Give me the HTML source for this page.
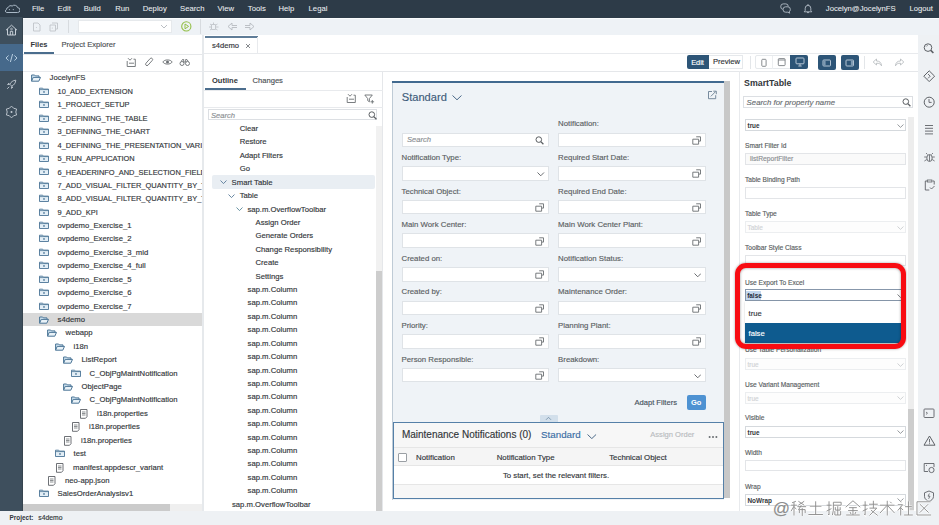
<!DOCTYPE html>
<html><head><meta charset="utf-8"><style>
html,body{margin:0;padding:0;width:939px;height:525px;overflow:hidden;background:#fff;position:relative}
body{font-family:"Liberation Sans",sans-serif}
.t{position:absolute;line-height:1;white-space:nowrap;-webkit-text-stroke:0.15px currentColor}
.r{position:absolute}
.clip{position:absolute;overflow:hidden}
</style></head><body>
<div class="r" style="left:0px;top:0px;width:939px;height:17.5px;background:#2d3b48;"></div>
<div class="r" style="left:0px;top:17px;width:23px;height:494px;background:#3e4f5d;"></div>
<div class="r" style="left:22px;top:17px;width:1px;height:494px;background:#36444f;"></div>
<div class="r" style="left:0px;top:44px;width:23px;height:26.5px;background:#46698b;"></div>
<div class="r" style="left:23px;top:17.5px;width:916px;height:18px;background:#eef2f6;"></div>
<div class="r" style="left:23px;top:17.5px;width:916px;height:1.5px;background:#f9fbfc;"></div>
<div class="r" style="left:0px;top:510.5px;width:939px;height:14.5px;background:#eef1f4;"></div>
<div class="r" style="left:23px;top:35px;width:180px;height:475.5px;background:#ffffff;"></div>
<div class="r" style="left:202px;top:35px;width:1.5px;height:475.5px;background:#e6e9ec;"></div>
<div class="r" style="left:203.5px;top:35px;width:714.5px;height:475.5px;background:#ffffff;"></div>
<div class="r" style="left:918px;top:35px;width:21px;height:475.5px;background:#eef1f4;"></div>
<div class="t" style="left:31.90px;top:4.88px;font-size:7.7px;color:#eef0f2;font-weight:400;font-style:normal;-webkit-text-stroke:0.05px currentColor">File</div>
<div class="t" style="left:57.60px;top:4.88px;font-size:7.7px;color:#eef0f2;font-weight:400;font-style:normal;-webkit-text-stroke:0.05px currentColor">Edit</div>
<div class="t" style="left:83.70px;top:4.88px;font-size:7.7px;color:#eef0f2;font-weight:400;font-style:normal;-webkit-text-stroke:0.05px currentColor">Build</div>
<div class="t" style="left:115.20px;top:4.88px;font-size:7.7px;color:#eef0f2;font-weight:400;font-style:normal;-webkit-text-stroke:0.05px currentColor">Run</div>
<div class="t" style="left:142.80px;top:4.88px;font-size:7.7px;color:#eef0f2;font-weight:400;font-style:normal;-webkit-text-stroke:0.05px currentColor">Deploy</div>
<div class="t" style="left:180.10px;top:4.88px;font-size:7.7px;color:#eef0f2;font-weight:400;font-style:normal;-webkit-text-stroke:0.05px currentColor">Search</div>
<div class="t" style="left:217.50px;top:4.88px;font-size:7.7px;color:#eef0f2;font-weight:400;font-style:normal;-webkit-text-stroke:0.05px currentColor">View</div>
<div class="t" style="left:247.80px;top:4.88px;font-size:7.7px;color:#eef0f2;font-weight:400;font-style:normal;-webkit-text-stroke:0.05px currentColor">Tools</div>
<div class="t" style="left:278.50px;top:4.88px;font-size:7.7px;color:#eef0f2;font-weight:400;font-style:normal;-webkit-text-stroke:0.05px currentColor">Help</div>
<div class="t" style="left:308.60px;top:4.88px;font-size:7.7px;color:#eef0f2;font-weight:400;font-style:normal;-webkit-text-stroke:0.05px currentColor">Legal</div>
<div class="t" style="left:825.80px;top:4.88px;font-size:7.7px;color:#eef0f2;font-weight:400;font-style:normal;-webkit-text-stroke:0.05px currentColor">Jocelyn@JocelynFS</div>
<div class="t" style="left:909.60px;top:4.97px;font-size:7.6px;color:#eef0f2;font-weight:400;font-style:normal;-webkit-text-stroke:0.05px currentColor">Logout</div>
<svg class="r" style="left:4px;top:4px;" width="16" height="10" viewBox="0 0 16 10" fill="none"><path d="M2.5 8.5h11a2.4 2.4 0 0 0 0.2-4.8a3.4 3.4 0 0 0-5.6-1.6a2.6 2.6 0 0 0-3.9 1.4a1.9 1.9 0 0 0-1.7 2a1.6 1.6 0 0 0 0 3z" stroke="#a9b8c6" stroke-width="1"/><circle cx="5.4" cy="5.6" r="0.6" fill="#a9b8c6"/><circle cx="9.3" cy="5.6" r="0.6" fill="#a9b8c6"/></svg>
<svg class="r" style="left:780px;top:3px;" width="12" height="11" viewBox="0 0 12 11" fill="none"><path d="M3.2 0.9h2.6a2.4 2.3 0 0 1 2.4 2.3v0.4M3.2 0.9a2.4 2.3 0 0 0-2.4 2.3v0.8a2.4 2.3 0 0 0 2 2.3" stroke="#b3bdc7" stroke-width="0.9"/><path d="M5.6 3.8h2.2a2.5 2.4 0 0 1 2.5 2.4v0.6a2.5 2.4 0 0 1-1.2 2l0.6 1.4l-1.9-1h-2.2a2.5 2.4 0 0 1-2.5-2.4v-0.6a2.5 2.4 0 0 1 2.5-2.4z" fill="#2d3b48" stroke="#b3bdc7" stroke-width="0.9"/></svg>
<svg class="r" style="left:803px;top:3px;" width="10" height="11" viewBox="0 0 10 11" fill="none"><path d="M5 1v1M2.2 7.5V5.2a2.8 2.8 0 0 1 5.6 0V7.5l1 1.3H1.2z" stroke="#b3bdc7" stroke-width="0.9"/><path d="M4 9.6h2" stroke="#b3bdc7" stroke-width="0.9"/></svg>
<svg class="r" style="left:5px;top:24px;" width="13" height="12" viewBox="0 0 13 12" fill="none"><path d="M1 6.2L6.5 1.2L12 6.2M2.5 5v6h8V5M5.3 11V7.3h2.4V11" stroke="#c6ced6" stroke-width="1"/><circle cx="6.5" cy="5" r="0.9" stroke="#c6ced6" stroke-width="0.7"/></svg>
<svg class="r" style="left:5px;top:53px;" width="13" height="10" viewBox="0 0 13 10" fill="none"><path d="M3.6 2.5L1 5l2.6 2.5M9.4 2.5L12 5L9.4 7.5M7.6 1L5.4 9" stroke="#b7cde0" stroke-width="1"/></svg>
<svg class="r" style="left:6px;top:79px;" width="11" height="11" viewBox="0 0 11 11" fill="none"><path d="M9.8 1.2C7 1.4 5 3 3.8 5.2L5.8 7.2C8 6 9.6 4 9.8 1.2z" stroke="#c6ced6" stroke-width="0.9"/><path d="M3.8 5.2L1.6 5.6L3 4M5.8 7.2L5.4 9.4L7 8M3.2 7.8L1.2 9.8" stroke="#c6ced6" stroke-width="0.9"/></svg>
<svg class="r" style="left:5px;top:105px;" width="13" height="14" viewBox="0 0 13 14" fill="none"><path d="M6.50 1.10L8.65 3.28L11.61 4.05L10.80 7.00L11.61 9.95L8.65 10.72L6.50 12.90L4.35 10.72L1.39 9.95L2.20 7.00L1.39 4.05L4.35 3.28Z" stroke="#c6ced6" stroke-width="0.9" stroke-linejoin="round"/><circle cx="6.5" cy="7" r="1" fill="#c6ced6"/></svg>
<svg class="r" style="left:32px;top:22px;" width="10" height="10" viewBox="0 0 10 10" fill="none"><path d="M1.5 1h4.5l2 2v6H1.5z" stroke="#bfc4c9" stroke-width="0.9"/><circle cx="4.4" cy="5.4" r="0.5" fill="#bfc4c9"/></svg>
<svg class="r" style="left:49px;top:22px;" width="10" height="10" viewBox="0 0 10 10" fill="none"><path d="M3 1h5.5v6H7M1 3h5.5v6H1z" stroke="#bfc4c9" stroke-width="0.9"/><circle cx="3.3" cy="6" r="0.6" fill="#bfc4c9"/></svg>
<div class="r" style="left:67.5px;top:20px;width:1px;height:13px;background:#d7dbdf;"></div>
<div class="r" style="left:77.8px;top:19.8px;width:94.7px;height:13.3px;background:#ffffff;border:1px solid #e6e9ec;box-sizing:border-box"></div>
<svg class="r" style="left:160px;top:24px;" width="8" height="5" viewBox="0 0 8 5" fill="none"><path d="M1 1l3 3l3-3" stroke="#b2b7bc" stroke-width="0.9"/></svg>
<svg class="r" style="left:180px;top:20px;" width="13" height="13" viewBox="0 0 13 13" fill="none"><circle cx="6.3" cy="6.4" r="4.6" stroke="#93bf47" stroke-width="1.1"/><path d="M5 4v4.8L8.6 6.4z" stroke="#93bf47" stroke-width="1"/></svg>
<div class="r" style="left:199.5px;top:19px;width:1px;height:15px;background:#d7dbdf;"></div>
<svg class="r" style="left:208px;top:21px;" width="12" height="11" viewBox="0 0 12 11" fill="none"><path d="M3.5 3.5h4v5h-4zM1 6h2.5M8 6h2.5M2 3l1.5 1M9.5 3L8 4M2 9l1.5-1M9.5 9L8 8M5.5 1.5v2" stroke="#bfc4c9" stroke-width="0.9"/></svg>
<svg class="r" style="left:227px;top:22px;" width="11" height="9" viewBox="0 0 11 9" fill="none"><path d="M10 3.5H5V1L1 4.5L5 8V5.5h5" stroke="#b5babf" stroke-width="0.9"/></svg>
<svg class="r" style="left:244px;top:22px;" width="11" height="9" viewBox="0 0 11 9" fill="none"><path d="M1 3.5h5V1l4 3.5L6 8V5.5H1" stroke="#b5babf" stroke-width="0.9"/></svg>
<div class="t" style="left:30.40px;top:41.15px;font-size:7.5px;color:#32363a;font-weight:700;font-style:normal;-webkit-text-stroke:0">Files</div>
<div class="t" style="left:61.50px;top:41.07px;font-size:7.6px;color:#4d5155;font-weight:400;font-style:normal;">Project Explorer</div>
<div class="r" style="left:24px;top:52px;width:30px;height:2px;background:#4b6d8d;"></div>
<div class="r" style="left:23px;top:53.5px;width:179px;height:1px;background:#e5e7ea;"></div>
<div class="r" style="left:23px;top:70.5px;width:179px;height:1px;background:#e8eaed;"></div>
<svg class="r" style="left:126px;top:57px;" width="11" height="11" viewBox="0 0 11 11" fill="none"><path d="M2 1.2l2 2l2-2M7.5 2.2h1.8v7.3H1.2V4" stroke="#6b6f73" stroke-width="0.9"/><path d="M3 6.2h5" stroke="#6b6f73" stroke-width="0.9"/></svg>
<svg class="r" style="left:144px;top:57px;" width="10" height="11" viewBox="0 0 10 11" fill="none"><path d="M6.2 1.5a1.4 1.4 0 0 1 2 2L4 8.2a1.4 1.4 0 0 1-2-2z" stroke="#6b6f73" stroke-width="0.9"/></svg>
<svg class="r" style="left:162px;top:58px;" width="11" height="8" viewBox="0 0 11 8" fill="none"><path d="M0.8 4C2.5 1.2 8.5 1.2 10.2 4C8.5 6.8 2.5 6.8 0.8 4z" stroke="#6b6f73" stroke-width="0.9"/><circle cx="5.5" cy="4" r="1.5" fill="#6b6f73"/></svg>
<svg class="r" style="left:179px;top:58px;" width="12" height="9" viewBox="0 0 12 9" fill="none"><circle cx="3" cy="5.5" r="2" stroke="#6b6f73" stroke-width="0.9"/><circle cx="8.5" cy="5.5" r="2" stroke="#6b6f73" stroke-width="0.9"/><path d="M2.2 3.5L3.5 1.5h1.2v2.5h2V1.5h1.2L9.3 3.5" stroke="#6b6f73" stroke-width="0.9"/></svg>
<div class="r" style="left:23px;top:313px;width:179px;height:13px;background:#d9d9d9;"></div>
<div class="clip" style="left:23px;top:71px;width:179px;height:432px">
<div class="t" style="left:26.60px;top:3.38px;font-size:7.7px;color:#32363a;font-weight:400;font-style:normal;">JocelynFS</div>
<svg class="r" style="left:8.099999999999998px;top:3.2px;" width="10" height="8" viewBox="0 0 10 8" fill="none"><path d="M0.6 7.2V1h3l0.8 0.9h3.6v1.5" fill="#cfe3f0" stroke="#4b7596" stroke-width="1"/><path d="M0.6 7.2l1.6-3.8h7.3l-1.7 3.8z" fill="#e9f2f8" stroke="#4b7596" stroke-width="1"/></svg>
<div class="t" style="left:34.60px;top:17.01px;font-size:7.45px;color:#32363a;font-weight:400;font-style:normal;">10_ADD_EXTENSION</div>
<svg class="r" style="left:16.099999999999998px;top:15.820000000000002px;" width="10" height="8" viewBox="0 0 10 8" fill="none"><path d="M0.5 1.2h3.2l0.8 0.9h5v5.4h-9z" fill="#e3eef6" stroke="#4b7596" stroke-width="0.9"/><path d="M0.5 2.6h9" stroke="#4b7596" stroke-width="0.8"/><circle cx="5" cy="4.9" r="0.85" fill="#4b7596"/></svg>
<div class="t" style="left:34.60px;top:30.43px;font-size:7.45px;color:#32363a;font-weight:400;font-style:normal;">1_PROJECT_SETUP</div>
<svg class="r" style="left:16.099999999999998px;top:29.240000000000002px;" width="10" height="8" viewBox="0 0 10 8" fill="none"><path d="M0.5 1.2h3.2l0.8 0.9h5v5.4h-9z" fill="#e3eef6" stroke="#4b7596" stroke-width="0.9"/><path d="M0.5 2.6h9" stroke="#4b7596" stroke-width="0.8"/><circle cx="5" cy="4.9" r="0.85" fill="#4b7596"/></svg>
<div class="t" style="left:34.60px;top:43.85px;font-size:7.45px;color:#32363a;font-weight:400;font-style:normal;">2_DEFINING_THE_TABLE</div>
<svg class="r" style="left:16.099999999999998px;top:42.65999999999999px;" width="10" height="8" viewBox="0 0 10 8" fill="none"><path d="M0.5 1.2h3.2l0.8 0.9h5v5.4h-9z" fill="#e3eef6" stroke="#4b7596" stroke-width="0.9"/><path d="M0.5 2.6h9" stroke="#4b7596" stroke-width="0.8"/><circle cx="5" cy="4.9" r="0.85" fill="#4b7596"/></svg>
<div class="t" style="left:34.60px;top:57.27px;font-size:7.45px;color:#32363a;font-weight:400;font-style:normal;">3_DEFINING_THE_CHART</div>
<svg class="r" style="left:16.099999999999998px;top:56.080000000000005px;" width="10" height="8" viewBox="0 0 10 8" fill="none"><path d="M0.5 1.2h3.2l0.8 0.9h5v5.4h-9z" fill="#e3eef6" stroke="#4b7596" stroke-width="0.9"/><path d="M0.5 2.6h9" stroke="#4b7596" stroke-width="0.8"/><circle cx="5" cy="4.9" r="0.85" fill="#4b7596"/></svg>
<div class="t" style="left:34.60px;top:70.69px;font-size:7.45px;color:#32363a;font-weight:400;font-style:normal;">4_DEFINING_THE_PRESENTATION_VARIANT</div>
<svg class="r" style="left:16.099999999999998px;top:69.5px;" width="10" height="8" viewBox="0 0 10 8" fill="none"><path d="M0.5 1.2h3.2l0.8 0.9h5v5.4h-9z" fill="#e3eef6" stroke="#4b7596" stroke-width="0.9"/><path d="M0.5 2.6h9" stroke="#4b7596" stroke-width="0.8"/><circle cx="5" cy="4.9" r="0.85" fill="#4b7596"/></svg>
<div class="t" style="left:34.60px;top:84.11px;font-size:7.45px;color:#32363a;font-weight:400;font-style:normal;">5_RUN_APPLICATION</div>
<svg class="r" style="left:16.099999999999998px;top:82.91999999999999px;" width="10" height="8" viewBox="0 0 10 8" fill="none"><path d="M0.5 1.2h3.2l0.8 0.9h5v5.4h-9z" fill="#e3eef6" stroke="#4b7596" stroke-width="0.9"/><path d="M0.5 2.6h9" stroke="#4b7596" stroke-width="0.8"/><circle cx="5" cy="4.9" r="0.85" fill="#4b7596"/></svg>
<div class="t" style="left:34.60px;top:97.53px;font-size:7.45px;color:#32363a;font-weight:400;font-style:normal;">6_HEADERINFO_AND_SELECTION_FIELDS</div>
<svg class="r" style="left:16.099999999999998px;top:96.34px;" width="10" height="8" viewBox="0 0 10 8" fill="none"><path d="M0.5 1.2h3.2l0.8 0.9h5v5.4h-9z" fill="#e3eef6" stroke="#4b7596" stroke-width="0.9"/><path d="M0.5 2.6h9" stroke="#4b7596" stroke-width="0.8"/><circle cx="5" cy="4.9" r="0.85" fill="#4b7596"/></svg>
<div class="t" style="left:34.60px;top:110.95px;font-size:7.45px;color:#32363a;font-weight:400;font-style:normal;">7_ADD_VISUAL_FILTER_QUANTITY_BY_TYPE</div>
<svg class="r" style="left:16.099999999999998px;top:109.76000000000002px;" width="10" height="8" viewBox="0 0 10 8" fill="none"><path d="M0.5 1.2h3.2l0.8 0.9h5v5.4h-9z" fill="#e3eef6" stroke="#4b7596" stroke-width="0.9"/><path d="M0.5 2.6h9" stroke="#4b7596" stroke-width="0.8"/><circle cx="5" cy="4.9" r="0.85" fill="#4b7596"/></svg>
<div class="t" style="left:34.60px;top:124.37px;font-size:7.45px;color:#32363a;font-weight:400;font-style:normal;">8_ADD_VISUAL_FILTER_QUANTITY_BY_TYPE</div>
<svg class="r" style="left:16.099999999999998px;top:123.18px;" width="10" height="8" viewBox="0 0 10 8" fill="none"><path d="M0.5 1.2h3.2l0.8 0.9h5v5.4h-9z" fill="#e3eef6" stroke="#4b7596" stroke-width="0.9"/><path d="M0.5 2.6h9" stroke="#4b7596" stroke-width="0.8"/><circle cx="5" cy="4.9" r="0.85" fill="#4b7596"/></svg>
<div class="t" style="left:34.60px;top:137.79px;font-size:7.45px;color:#32363a;font-weight:400;font-style:normal;">9_ADD_KPI</div>
<svg class="r" style="left:16.099999999999998px;top:136.6px;" width="10" height="8" viewBox="0 0 10 8" fill="none"><path d="M0.5 1.2h3.2l0.8 0.9h5v5.4h-9z" fill="#e3eef6" stroke="#4b7596" stroke-width="0.9"/><path d="M0.5 2.6h9" stroke="#4b7596" stroke-width="0.8"/><circle cx="5" cy="4.9" r="0.85" fill="#4b7596"/></svg>
<div class="t" style="left:34.60px;top:151.00px;font-size:7.7px;color:#32363a;font-weight:400;font-style:normal;">ovpdemo_Exercise_1</div>
<svg class="r" style="left:16.099999999999998px;top:150.02px;" width="10" height="8" viewBox="0 0 10 8" fill="none"><path d="M0.5 1.2h3.2l0.8 0.9h5v5.4h-9z" fill="#e3eef6" stroke="#4b7596" stroke-width="0.9"/><path d="M0.5 2.6h9" stroke="#4b7596" stroke-width="0.8"/><circle cx="5" cy="4.9" r="0.85" fill="#4b7596"/></svg>
<div class="t" style="left:34.60px;top:164.42px;font-size:7.7px;color:#32363a;font-weight:400;font-style:normal;">ovpdemo_Exercise_2</div>
<svg class="r" style="left:16.099999999999998px;top:163.44px;" width="10" height="8" viewBox="0 0 10 8" fill="none"><path d="M0.5 1.2h3.2l0.8 0.9h5v5.4h-9z" fill="#e3eef6" stroke="#4b7596" stroke-width="0.9"/><path d="M0.5 2.6h9" stroke="#4b7596" stroke-width="0.8"/><circle cx="5" cy="4.9" r="0.85" fill="#4b7596"/></svg>
<div class="t" style="left:34.60px;top:177.84px;font-size:7.7px;color:#32363a;font-weight:400;font-style:normal;">ovpdemo_Exercise_3_mid</div>
<svg class="r" style="left:16.099999999999998px;top:176.86px;" width="10" height="8" viewBox="0 0 10 8" fill="none"><path d="M0.5 1.2h3.2l0.8 0.9h5v5.4h-9z" fill="#e3eef6" stroke="#4b7596" stroke-width="0.9"/><path d="M0.5 2.6h9" stroke="#4b7596" stroke-width="0.8"/><circle cx="5" cy="4.9" r="0.85" fill="#4b7596"/></svg>
<div class="t" style="left:34.60px;top:191.26px;font-size:7.7px;color:#32363a;font-weight:400;font-style:normal;">ovpdemo_Exercise_4_full</div>
<svg class="r" style="left:16.099999999999998px;top:190.28px;" width="10" height="8" viewBox="0 0 10 8" fill="none"><path d="M0.5 1.2h3.2l0.8 0.9h5v5.4h-9z" fill="#e3eef6" stroke="#4b7596" stroke-width="0.9"/><path d="M0.5 2.6h9" stroke="#4b7596" stroke-width="0.8"/><circle cx="5" cy="4.9" r="0.85" fill="#4b7596"/></svg>
<div class="t" style="left:34.60px;top:204.68px;font-size:7.7px;color:#32363a;font-weight:400;font-style:normal;">ovpdemo_Exercise_5</div>
<svg class="r" style="left:16.099999999999998px;top:203.70000000000002px;" width="10" height="8" viewBox="0 0 10 8" fill="none"><path d="M0.5 1.2h3.2l0.8 0.9h5v5.4h-9z" fill="#e3eef6" stroke="#4b7596" stroke-width="0.9"/><path d="M0.5 2.6h9" stroke="#4b7596" stroke-width="0.8"/><circle cx="5" cy="4.9" r="0.85" fill="#4b7596"/></svg>
<div class="t" style="left:34.60px;top:218.10px;font-size:7.7px;color:#32363a;font-weight:400;font-style:normal;">ovpdemo_Exercise_6</div>
<svg class="r" style="left:16.099999999999998px;top:217.12000000000003px;" width="10" height="8" viewBox="0 0 10 8" fill="none"><path d="M0.5 1.2h3.2l0.8 0.9h5v5.4h-9z" fill="#e3eef6" stroke="#4b7596" stroke-width="0.9"/><path d="M0.5 2.6h9" stroke="#4b7596" stroke-width="0.8"/><circle cx="5" cy="4.9" r="0.85" fill="#4b7596"/></svg>
<div class="t" style="left:34.60px;top:231.52px;font-size:7.7px;color:#32363a;font-weight:400;font-style:normal;">ovpdemo_Exercise_7</div>
<svg class="r" style="left:16.099999999999998px;top:230.54px;" width="10" height="8" viewBox="0 0 10 8" fill="none"><path d="M0.5 1.2h3.2l0.8 0.9h5v5.4h-9z" fill="#e3eef6" stroke="#4b7596" stroke-width="0.9"/><path d="M0.5 2.6h9" stroke="#4b7596" stroke-width="0.8"/><circle cx="5" cy="4.9" r="0.85" fill="#4b7596"/></svg>
<div class="t" style="left:34.60px;top:244.94px;font-size:7.7px;color:#32363a;font-weight:400;font-style:normal;">s4demo</div>
<svg class="r" style="left:16.099999999999998px;top:244.76px;" width="10" height="8" viewBox="0 0 10 8" fill="none"><path d="M0.6 7.2V1h3l0.8 0.9h3.6v1.5" fill="#cfe3f0" stroke="#4b7596" stroke-width="1"/><path d="M0.6 7.2l1.6-3.8h7.3l-1.7 3.8z" fill="#e9f2f8" stroke="#4b7596" stroke-width="1"/></svg>
<div class="t" style="left:42.60px;top:258.36px;font-size:7.7px;color:#32363a;font-weight:400;font-style:normal;">webapp</div>
<svg class="r" style="left:24.099999999999998px;top:258.18px;" width="10" height="8" viewBox="0 0 10 8" fill="none"><path d="M0.6 7.2V1h3l0.8 0.9h3.6v1.5" fill="#cfe3f0" stroke="#4b7596" stroke-width="1"/><path d="M0.6 7.2l1.6-3.8h7.3l-1.7 3.8z" fill="#e9f2f8" stroke="#4b7596" stroke-width="1"/></svg>
<div class="t" style="left:50.60px;top:271.78px;font-size:7.7px;color:#32363a;font-weight:400;font-style:normal;">i18n</div>
<svg class="r" style="left:32.1px;top:271.59999999999997px;" width="10" height="8" viewBox="0 0 10 8" fill="none"><path d="M0.6 7.2V1h3l0.8 0.9h3.6v1.5" fill="#cfe3f0" stroke="#4b7596" stroke-width="1"/><path d="M0.6 7.2l1.6-3.8h7.3l-1.7 3.8z" fill="#e9f2f8" stroke="#4b7596" stroke-width="1"/></svg>
<div class="t" style="left:58.60px;top:285.20px;font-size:7.7px;color:#32363a;font-weight:400;font-style:normal;">ListReport</div>
<svg class="r" style="left:40.1px;top:285.02px;" width="10" height="8" viewBox="0 0 10 8" fill="none"><path d="M0.6 7.2V1h3l0.8 0.9h3.6v1.5" fill="#cfe3f0" stroke="#4b7596" stroke-width="1"/><path d="M0.6 7.2l1.6-3.8h7.3l-1.7 3.8z" fill="#e9f2f8" stroke="#4b7596" stroke-width="1"/></svg>
<div class="t" style="left:66.60px;top:298.62px;font-size:7.7px;color:#32363a;font-weight:400;font-style:normal;">C_ObjPgMaintNotification</div>
<svg class="r" style="left:48.10000000000001px;top:297.64px;" width="10" height="8" viewBox="0 0 10 8" fill="none"><path d="M0.5 1.2h3.2l0.8 0.9h5v5.4h-9z" fill="#e3eef6" stroke="#4b7596" stroke-width="0.9"/><path d="M0.5 2.6h9" stroke="#4b7596" stroke-width="0.8"/><circle cx="5" cy="4.9" r="0.85" fill="#4b7596"/></svg>
<div class="t" style="left:58.60px;top:312.04px;font-size:7.7px;color:#32363a;font-weight:400;font-style:normal;">ObjectPage</div>
<svg class="r" style="left:40.1px;top:311.86px;" width="10" height="8" viewBox="0 0 10 8" fill="none"><path d="M0.6 7.2V1h3l0.8 0.9h3.6v1.5" fill="#cfe3f0" stroke="#4b7596" stroke-width="1"/><path d="M0.6 7.2l1.6-3.8h7.3l-1.7 3.8z" fill="#e9f2f8" stroke="#4b7596" stroke-width="1"/></svg>
<div class="t" style="left:66.60px;top:325.46px;font-size:7.7px;color:#32363a;font-weight:400;font-style:normal;">C_ObjPgMaintNotification</div>
<svg class="r" style="left:48.10000000000001px;top:325.28px;" width="10" height="8" viewBox="0 0 10 8" fill="none"><path d="M0.6 7.2V1h3l0.8 0.9h3.6v1.5" fill="#cfe3f0" stroke="#4b7596" stroke-width="1"/><path d="M0.6 7.2l1.6-3.8h7.3l-1.7 3.8z" fill="#e9f2f8" stroke="#4b7596" stroke-width="1"/></svg>
<div class="t" style="left:74.00px;top:338.88px;font-size:7.7px;color:#32363a;font-weight:400;font-style:normal;">i18n.properties</div>
<svg class="r" style="left:56.7px;top:337.9px;" width="8" height="10" viewBox="0 0 8 10" fill="none"><path d="M0.5 0.5h6.5v7.2l-1.5 1.6h-5z" fill="#fff" stroke="#5d6166" stroke-width="0.9"/><path d="M2 3h3.5M2 4.5h3.5M2 6h3.5" stroke="#5d6166" stroke-width="0.7"/></svg>
<div class="t" style="left:66.00px;top:352.30px;font-size:7.7px;color:#32363a;font-weight:400;font-style:normal;">i18n.properties</div>
<svg class="r" style="left:48.7px;top:351.32px;" width="8" height="10" viewBox="0 0 8 10" fill="none"><path d="M0.5 0.5h6.5v7.2l-1.5 1.6h-5z" fill="#fff" stroke="#5d6166" stroke-width="0.9"/><path d="M2 3h3.5M2 4.5h3.5M2 6h3.5" stroke="#5d6166" stroke-width="0.7"/></svg>
<div class="t" style="left:58.00px;top:365.72px;font-size:7.7px;color:#32363a;font-weight:400;font-style:normal;">i18n.properties</div>
<svg class="r" style="left:40.699999999999996px;top:364.73999999999995px;" width="8" height="10" viewBox="0 0 8 10" fill="none"><path d="M0.5 0.5h6.5v7.2l-1.5 1.6h-5z" fill="#fff" stroke="#5d6166" stroke-width="0.9"/><path d="M2 3h3.5M2 4.5h3.5M2 6h3.5" stroke="#5d6166" stroke-width="0.7"/></svg>
<div class="t" style="left:50.60px;top:379.14px;font-size:7.7px;color:#32363a;font-weight:400;font-style:normal;">test</div>
<svg class="r" style="left:32.1px;top:378.15999999999997px;" width="10" height="8" viewBox="0 0 10 8" fill="none"><path d="M0.5 1.2h3.2l0.8 0.9h5v5.4h-9z" fill="#e3eef6" stroke="#4b7596" stroke-width="0.9"/><path d="M0.5 2.6h9" stroke="#4b7596" stroke-width="0.8"/><circle cx="5" cy="4.9" r="0.85" fill="#4b7596"/></svg>
<div class="t" style="left:50.00px;top:392.56px;font-size:7.7px;color:#32363a;font-weight:400;font-style:normal;">manifest.appdescr_variant</div>
<svg class="r" style="left:32.699999999999996px;top:391.58px;" width="8" height="10" viewBox="0 0 8 10" fill="none"><path d="M0.5 0.5h6.5v7.2l-1.5 1.6h-5z" fill="#fff" stroke="#5d6166" stroke-width="0.9"/><path d="M2 3h3.5M2 4.5h3.5M2 6h3.5" stroke="#5d6166" stroke-width="0.7"/></svg>
<div class="t" style="left:42.00px;top:405.98px;font-size:7.7px;color:#32363a;font-weight:400;font-style:normal;">neo-app.json</div>
<svg class="r" style="left:24.7px;top:405.0px;" width="8" height="10" viewBox="0 0 8 10" fill="none"><path d="M0.5 0.5h6.5v7.2l-1.5 1.6h-5z" fill="#fff" stroke="#5d6166" stroke-width="0.9"/><path d="M2 3h3.5M2 4.5h3.5M2 6h3.5" stroke="#5d6166" stroke-width="0.7"/></svg>
<div class="t" style="left:34.60px;top:419.40px;font-size:7.7px;color:#32363a;font-weight:400;font-style:normal;">SalesOrderAnalysisv1</div>
<svg class="r" style="left:16.099999999999998px;top:418.41999999999996px;" width="10" height="8" viewBox="0 0 10 8" fill="none"><path d="M0.5 1.2h3.2l0.8 0.9h5v5.4h-9z" fill="#e3eef6" stroke="#4b7596" stroke-width="0.9"/><path d="M0.5 2.6h9" stroke="#4b7596" stroke-width="0.8"/><circle cx="5" cy="4.9" r="0.85" fill="#4b7596"/></svg>
</div>
<div class="r" style="left:23px;top:503.5px;width:179px;height:7px;background:#efefef;"></div>
<div class="r" style="left:23px;top:503.5px;width:146.5px;height:7px;background:#cbcbcb;"></div>
<div class="r" style="left:258px;top:35.5px;width:660px;height:17.5px;background:#ffffff;"></div>
<div class="r" style="left:205px;top:35.5px;width:53px;height:2px;background:#5f7d98;"></div>
<div class="r" style="left:257px;top:37px;width:1px;height:16px;background:#e8eaed;"></div>
<div class="t" style="left:212.00px;top:41.57px;font-size:7.6px;color:#32363a;font-weight:400;font-style:normal;">s4demo</div>
<svg class="r" style="left:245px;top:42.5px;" width="6" height="6" viewBox="0 0 6 6" fill="none"><path d="M1 1l4 4M5 1L1 5" stroke="#5f6368" stroke-width="0.75"/></svg>
<div class="r" style="left:203.5px;top:52.8px;width:714.5px;height:1px;background:#e8eaed;"></div>
<div class="r" style="left:203.5px;top:70.5px;width:714.5px;height:1px;background:#e5e7ea;"></div>
<div class="r" style="left:687px;top:55.2px;width:21.6px;height:14px;background:#2d5577;border-radius:2px 0 0 2px"></div>
<div class="t" style="left:691.20px;top:58.64px;font-size:7.4px;color:#ffffff;font-weight:400;font-style:normal;">Edit</div>
<div class="r" style="left:708.6px;top:55.2px;width:34.5px;height:14px;background:#ffffff;border:1px solid #e6e9ec;border-left:none;box-sizing:border-box"></div>
<div class="t" style="left:712.90px;top:58.47px;font-size:7.6px;color:#32363a;font-weight:400;font-style:normal;">Preview</div>
<div class="r" style="left:749.5px;top:56px;width:1px;height:13px;background:#e3e6e9;"></div>
<div class="r" style="left:754.5px;top:55.2px;width:53.3px;height:14.2px;background:#ffffff;border:1px solid #e6e9ec;border-radius:2px;box-sizing:border-box"></div>
<div class="r" style="left:772px;top:56px;width:1px;height:12.5px;background:#eceef0;"></div>
<div class="r" style="left:790.1px;top:55.2px;width:17.7px;height:14.2px;background:#2d5577;border-radius:0 2px 2px 0"></div>
<svg class="r" style="left:760px;top:57.5px;" width="8" height="10" viewBox="0 0 8 10" fill="none"><rect x="1.8" y="1.3" width="4.3" height="7" rx="0.8" stroke="#7b7f83" stroke-width="0.9"/></svg>
<svg class="r" style="left:777px;top:57px;" width="10" height="10" viewBox="0 0 10 10" fill="none"><rect x="1.3" y="1.6" width="6.8" height="7" rx="0.8" stroke="#7b7f83" stroke-width="0.9"/><path d="M1.3 3h6.8" stroke="#7b7f83" stroke-width="0.9"/></svg>
<svg class="r" style="left:794.5px;top:57px;" width="10" height="10" viewBox="0 0 10 10" fill="none"><rect x="1" y="1" width="8" height="5.8" rx="0.8" stroke="#c5d3df" stroke-width="0.9"/><path d="M5 6.8v2M3.3 9h3.4" stroke="#c5d3df" stroke-width="0.9"/></svg>
<div class="r" style="left:818.2px;top:55.1px;width:17.8px;height:14.6px;background:#2d5577;border-radius:2px"></div>
<div class="r" style="left:840.8px;top:55.1px;width:17.8px;height:14.6px;background:#2d5577;border-radius:2px"></div>
<svg class="r" style="left:822px;top:58.5px;" width="10" height="8" viewBox="0 0 10 8" fill="none"><rect x="1" y="1" width="7.5" height="6" rx="0.8" stroke="#c5d3df" stroke-width="0.9"/><rect x="1.4" y="1.4" width="2.2" height="5.2" fill="#7f9bb3"/></svg>
<svg class="r" style="left:845px;top:58.5px;" width="10" height="8" viewBox="0 0 10 8" fill="none"><rect x="1" y="1" width="7.5" height="6" rx="0.8" stroke="#c5d3df" stroke-width="0.9"/><rect x="5.9" y="1.4" width="2.2" height="5.2" fill="#7f9bb3"/></svg>
<div class="r" style="left:863.7px;top:56px;width:1px;height:13px;background:#e3e6e9;"></div>
<svg class="r" style="left:872px;top:58px;" width="11" height="9" viewBox="0 0 11 9" fill="none"><path d="M4.5 1L1.2 4l3.3 3V5.2c2.5 0 4 0.6 5 2.6C9.3 4.6 7.6 3 4.5 3z" stroke="#b8bcc0" stroke-width="0.9"/></svg>
<svg class="r" style="left:894px;top:58px;" width="11" height="9" viewBox="0 0 11 9" fill="none"><path d="M6.5 1L9.8 4L6.5 7V5.2c-2.5 0-4 0.6-5 2.6C1.7 4.6 3.4 3 6.5 3z" stroke="#b8bcc0" stroke-width="0.9"/></svg>
<div class="r" style="left:382.2px;top:71px;width:1px;height:439.5px;background:#e5e7ea;"></div>
<div class="t" style="left:212.00px;top:76.65px;font-size:7.5px;color:#32363a;font-weight:700;font-style:normal;-webkit-text-stroke:0">Outline</div>
<div class="t" style="left:252.50px;top:76.57px;font-size:7.6px;color:#4d5155;font-weight:400;font-style:normal;">Changes</div>
<div class="r" style="left:205px;top:88px;width:41px;height:2px;background:#4b6d8d;"></div>
<div class="r" style="left:203.5px;top:89.5px;width:179px;height:1px;background:#e8eaed;"></div>
<div class="r" style="left:203.5px;top:106.5px;width:179px;height:1px;background:#e8eaed;"></div>
<svg class="r" style="left:346px;top:93px;" width="11" height="11" viewBox="0 0 11 11" fill="none"><path d="M2 1.2l2 2l2-2M7.5 2.2h1.8v7.3H1.2V4" stroke="#6b6f73" stroke-width="0.9"/><path d="M3 6.2h5" stroke="#6b6f73" stroke-width="0.9"/></svg>
<svg class="r" style="left:364px;top:94px;" width="11" height="10" viewBox="0 0 11 10" fill="none"><path d="M0.8 1h7.5L5.4 4.6v3.2L3.7 6.6V4.6z" stroke="#6b6f73" stroke-width="0.9"/><path d="M8.3 6v3.6M6.5 7.8h3.6" stroke="#6b6f73" stroke-width="0.9"/></svg>
<div class="r" style="left:208px;top:108.5px;width:169.4px;height:11.7px;background:#ffffff;border:1px solid #dcdfe3;box-sizing:border-box"></div>
<div class="t" style="left:211.00px;top:111.97px;font-size:7.6px;color:#8b8f93;font-weight:400;font-style:italic;">Search</div>
<svg class="r" style="left:367.5px;top:110.6px;" width="10" height="9" viewBox="0 0 10 9" fill="none"><circle cx="3.8" cy="3.6" r="2.8" stroke="#5a5e62" stroke-width="1"/><path d="M5.8 5.6l2.6 2.6" stroke="#5a5e62" stroke-width="1.3"/></svg>
<div class="r" style="left:376px;top:125.5px;width:6px;height:385px;background:#f1f1f1;"></div>
<div class="r" style="left:376px;top:270.5px;width:6px;height:240px;background:#cdcdcd;"></div>
<div class="r" style="left:212px;top:174.8px;width:163px;height:14.4px;background:#e9eef3;border-radius:2px"></div>
<svg class="r" style="left:219.6px;top:180.3px;" width="7" height="4.4" viewBox="0 0 7 4.4" fill="none"><path d="M0.5 0.5L3.5 3.6L6.5 0.5" stroke="#5a7b98" stroke-width="0.9"/></svg>
<svg class="r" style="left:227.6px;top:193.7px;" width="7" height="4.4" viewBox="0 0 7 4.4" fill="none"><path d="M0.5 0.5L3.5 3.6L6.5 0.5" stroke="#5a7b98" stroke-width="0.9"/></svg>
<svg class="r" style="left:235.6px;top:207.1px;" width="7" height="4.4" viewBox="0 0 7 4.4" fill="none"><path d="M0.5 0.5L3.5 3.6L6.5 0.5" stroke="#5a8a99" stroke-width="0.9"/></svg>
<div class="t" style="left:239.70px;top:124.98px;font-size:7.7px;color:#32363a;font-weight:400;font-style:normal;">Clear</div>
<div class="t" style="left:239.70px;top:138.40px;font-size:7.7px;color:#32363a;font-weight:400;font-style:normal;">Restore</div>
<div class="t" style="left:239.70px;top:151.82px;font-size:7.7px;color:#32363a;font-weight:400;font-style:normal;">Adapt Filters</div>
<div class="t" style="left:239.70px;top:165.24px;font-size:7.7px;color:#32363a;font-weight:400;font-style:normal;">Go</div>
<div class="t" style="left:231.60px;top:178.66px;font-size:7.7px;color:#32363a;font-weight:400;font-style:normal;">Smart Table</div>
<div class="t" style="left:239.70px;top:192.08px;font-size:7.7px;color:#32363a;font-weight:400;font-style:normal;">Table</div>
<div class="t" style="left:247.40px;top:205.50px;font-size:7.7px;color:#32363a;font-weight:400;font-style:normal;">sap.m.OverflowToolbar</div>
<div class="t" style="left:255.50px;top:218.92px;font-size:7.7px;color:#32363a;font-weight:400;font-style:normal;">Assign Order</div>
<div class="t" style="left:255.50px;top:232.34px;font-size:7.7px;color:#32363a;font-weight:400;font-style:normal;">Generate Orders</div>
<div class="t" style="left:255.50px;top:245.76px;font-size:7.7px;color:#32363a;font-weight:400;font-style:normal;">Change Responsibility</div>
<div class="t" style="left:255.50px;top:259.18px;font-size:7.7px;color:#32363a;font-weight:400;font-style:normal;">Create</div>
<div class="t" style="left:255.50px;top:272.60px;font-size:7.7px;color:#32363a;font-weight:400;font-style:normal;">Settings</div>
<div class="t" style="left:247.60px;top:286.02px;font-size:7.7px;color:#32363a;font-weight:400;font-style:normal;">sap.m.Column</div>
<div class="t" style="left:247.60px;top:299.44px;font-size:7.7px;color:#32363a;font-weight:400;font-style:normal;">sap.m.Column</div>
<div class="t" style="left:247.60px;top:312.86px;font-size:7.7px;color:#32363a;font-weight:400;font-style:normal;">sap.m.Column</div>
<div class="t" style="left:247.60px;top:326.28px;font-size:7.7px;color:#32363a;font-weight:400;font-style:normal;">sap.m.Column</div>
<div class="t" style="left:247.60px;top:339.70px;font-size:7.7px;color:#32363a;font-weight:400;font-style:normal;">sap.m.Column</div>
<div class="t" style="left:247.60px;top:353.12px;font-size:7.7px;color:#32363a;font-weight:400;font-style:normal;">sap.m.Column</div>
<div class="t" style="left:247.60px;top:366.54px;font-size:7.7px;color:#32363a;font-weight:400;font-style:normal;">sap.m.Column</div>
<div class="t" style="left:247.60px;top:379.96px;font-size:7.7px;color:#32363a;font-weight:400;font-style:normal;">sap.m.Column</div>
<div class="t" style="left:247.60px;top:393.38px;font-size:7.7px;color:#32363a;font-weight:400;font-style:normal;">sap.m.Column</div>
<div class="t" style="left:247.60px;top:406.80px;font-size:7.7px;color:#32363a;font-weight:400;font-style:normal;">sap.m.Column</div>
<div class="t" style="left:247.60px;top:420.22px;font-size:7.7px;color:#32363a;font-weight:400;font-style:normal;">sap.m.Column</div>
<div class="t" style="left:247.60px;top:433.64px;font-size:7.7px;color:#32363a;font-weight:400;font-style:normal;">sap.m.Column</div>
<div class="t" style="left:247.60px;top:447.06px;font-size:7.7px;color:#32363a;font-weight:400;font-style:normal;">sap.m.Column</div>
<div class="t" style="left:247.60px;top:460.48px;font-size:7.7px;color:#32363a;font-weight:400;font-style:normal;">sap.m.Column</div>
<div class="t" style="left:247.60px;top:473.90px;font-size:7.7px;color:#32363a;font-weight:400;font-style:normal;">sap.m.Column</div>
<div class="t" style="left:247.60px;top:487.32px;font-size:7.7px;color:#32363a;font-weight:400;font-style:normal;">sap.m.Column</div>
<div class="t" style="left:232.00px;top:500.74px;font-size:7.7px;color:#32363a;font-weight:400;font-style:normal;">sap.m.OverflowToolbar</div>
<div class="r" style="left:392px;top:81px;width:332px;height:419px;background:#eff3f7;border-left:1px solid #bfcbd6;box-sizing:border-box"></div>
<div class="r" style="left:392px;top:81px;width:332px;height:2.4px;background:#41698f;"></div>
<div class="r" style="left:724px;top:81px;width:6px;height:417px;background:#c8c8c8;"></div>
<div class="t" style="left:401.80px;top:91.60px;font-size:11.1px;color:#3d5b7a;font-weight:400;font-style:normal;">Standard</div>
<svg class="r" style="left:452px;top:95.2px;" width="10" height="5.6" viewBox="0 0 10 5.6" fill="none"><path d="M0.5 0.5L5.0 4.8L9.5 0.5" stroke="#4a6888" stroke-width="1"/></svg>
<svg class="r" style="left:707px;top:89.5px;" width="11" height="10" viewBox="0 0 11 10" fill="none"><path d="M5 1.5H1.5v7.2h7.2V5.2" stroke="#6a7f93" stroke-width="0.9"/><path d="M3.8 6.4L8.6 1.6M6.3 1.2h3v3" stroke="#6a7f93" stroke-width="0.9"/></svg>
<div class="r" style="left:401.5px;top:132.6px;width:147.8px;height:14.4px;background:#ffffff;border:1px solid #dfe3e7;box-sizing:border-box"></div>
<svg class="r" style="left:534.8px;top:136.2px;" width="10" height="9" viewBox="0 0 10 9" fill="none"><circle cx="3.8" cy="3.6" r="2.8" stroke="#5a5e62" stroke-width="1"/><path d="M5.8 5.6l2.6 2.6" stroke="#5a5e62" stroke-width="1.3"/></svg>
<div class="t" style="left:558.10px;top:120.30px;font-size:7.8px;color:#5b5f63;font-weight:400;font-style:normal;">Notification:</div>
<div class="r" style="left:558.1px;top:132.6px;width:147.8px;height:14.4px;background:#ffffff;border:1px solid #dfe3e7;box-sizing:border-box"></div>
<svg class="r" style="left:691.9000000000001px;top:135.7px;" width="10" height="9" viewBox="0 0 10 9" fill="none"><path d="M4.2 0.8h4.3v4.3H6.6" stroke="#6a6e72" stroke-width="0.9"/><path d="M0.8 3.2h5.8v5H0.8z" fill="#fff" stroke="#6a6e72" stroke-width="0.9"/></svg>
<div class="t" style="left:401.50px;top:153.93px;font-size:7.8px;color:#5b5f63;font-weight:400;font-style:normal;">Notification Type:</div>
<div class="r" style="left:401.5px;top:166.23px;width:147.8px;height:14.4px;background:#ffffff;border:1px solid #dfe3e7;box-sizing:border-box"></div>
<svg class="r" style="left:537.0999999999999px;top:171.82999999999998px;" width="7.5" height="4.6" viewBox="0 0 7.5 4.6" fill="none"><path d="M0.5 0.5L3.75 3.8000000000000003L7.0 0.5" stroke="#5a5e62" stroke-width="0.9"/></svg>
<div class="t" style="left:558.10px;top:153.93px;font-size:7.8px;color:#5b5f63;font-weight:400;font-style:normal;">Required Start Date:</div>
<div class="r" style="left:558.1px;top:166.23px;width:147.8px;height:14.4px;background:#ffffff;border:1px solid #dfe3e7;box-sizing:border-box"></div>
<svg class="r" style="left:691.9000000000001px;top:169.32999999999998px;" width="10" height="9" viewBox="0 0 10 9" fill="none"><path d="M4.2 0.8h4.3v4.3H6.6" stroke="#6a6e72" stroke-width="0.9"/><path d="M0.8 3.2h5.8v5H0.8z" fill="#fff" stroke="#6a6e72" stroke-width="0.9"/></svg>
<div class="t" style="left:401.50px;top:187.56px;font-size:7.8px;color:#5b5f63;font-weight:400;font-style:normal;">Technical Object:</div>
<div class="r" style="left:401.5px;top:199.86px;width:147.8px;height:14.4px;background:#ffffff;border:1px solid #dfe3e7;box-sizing:border-box"></div>
<svg class="r" style="left:535.3px;top:202.96px;" width="10" height="9" viewBox="0 0 10 9" fill="none"><path d="M4.2 0.8h4.3v4.3H6.6" stroke="#6a6e72" stroke-width="0.9"/><path d="M0.8 3.2h5.8v5H0.8z" fill="#fff" stroke="#6a6e72" stroke-width="0.9"/></svg>
<div class="t" style="left:558.10px;top:187.56px;font-size:7.8px;color:#5b5f63;font-weight:400;font-style:normal;">Required End Date:</div>
<div class="r" style="left:558.1px;top:199.86px;width:147.8px;height:14.4px;background:#ffffff;border:1px solid #dfe3e7;box-sizing:border-box"></div>
<svg class="r" style="left:691.9000000000001px;top:202.96px;" width="10" height="9" viewBox="0 0 10 9" fill="none"><path d="M4.2 0.8h4.3v4.3H6.6" stroke="#6a6e72" stroke-width="0.9"/><path d="M0.8 3.2h5.8v5H0.8z" fill="#fff" stroke="#6a6e72" stroke-width="0.9"/></svg>
<div class="t" style="left:401.50px;top:221.19px;font-size:7.8px;color:#5b5f63;font-weight:400;font-style:normal;">Main Work Center:</div>
<div class="r" style="left:401.5px;top:233.49px;width:147.8px;height:14.4px;background:#ffffff;border:1px solid #dfe3e7;box-sizing:border-box"></div>
<svg class="r" style="left:535.3px;top:236.59px;" width="10" height="9" viewBox="0 0 10 9" fill="none"><path d="M4.2 0.8h4.3v4.3H6.6" stroke="#6a6e72" stroke-width="0.9"/><path d="M0.8 3.2h5.8v5H0.8z" fill="#fff" stroke="#6a6e72" stroke-width="0.9"/></svg>
<div class="t" style="left:558.10px;top:221.19px;font-size:7.8px;color:#5b5f63;font-weight:400;font-style:normal;">Main Work Center Plant:</div>
<div class="r" style="left:558.1px;top:233.49px;width:147.8px;height:14.4px;background:#ffffff;border:1px solid #dfe3e7;box-sizing:border-box"></div>
<svg class="r" style="left:691.9000000000001px;top:236.59px;" width="10" height="9" viewBox="0 0 10 9" fill="none"><path d="M4.2 0.8h4.3v4.3H6.6" stroke="#6a6e72" stroke-width="0.9"/><path d="M0.8 3.2h5.8v5H0.8z" fill="#fff" stroke="#6a6e72" stroke-width="0.9"/></svg>
<div class="t" style="left:401.50px;top:254.82px;font-size:7.8px;color:#5b5f63;font-weight:400;font-style:normal;">Created on:</div>
<div class="r" style="left:401.5px;top:267.12px;width:147.8px;height:14.4px;background:#ffffff;border:1px solid #dfe3e7;box-sizing:border-box"></div>
<svg class="r" style="left:535.3px;top:270.22px;" width="10" height="9" viewBox="0 0 10 9" fill="none"><path d="M4.2 0.8h4.3v4.3H6.6" stroke="#6a6e72" stroke-width="0.9"/><path d="M0.8 3.2h5.8v5H0.8z" fill="#fff" stroke="#6a6e72" stroke-width="0.9"/></svg>
<div class="t" style="left:558.10px;top:254.82px;font-size:7.8px;color:#5b5f63;font-weight:400;font-style:normal;">Notification Status:</div>
<div class="r" style="left:558.1px;top:267.12px;width:147.8px;height:14.4px;background:#ffffff;border:1px solid #dfe3e7;box-sizing:border-box"></div>
<svg class="r" style="left:693.7px;top:272.72px;" width="7.5" height="4.6" viewBox="0 0 7.5 4.6" fill="none"><path d="M0.5 0.5L3.75 3.8000000000000003L7.0 0.5" stroke="#5a5e62" stroke-width="0.9"/></svg>
<div class="t" style="left:401.50px;top:288.45px;font-size:7.8px;color:#5b5f63;font-weight:400;font-style:normal;">Created by:</div>
<div class="r" style="left:401.5px;top:300.75px;width:147.8px;height:14.4px;background:#ffffff;border:1px solid #dfe3e7;box-sizing:border-box"></div>
<svg class="r" style="left:535.3px;top:303.85px;" width="10" height="9" viewBox="0 0 10 9" fill="none"><path d="M4.2 0.8h4.3v4.3H6.6" stroke="#6a6e72" stroke-width="0.9"/><path d="M0.8 3.2h5.8v5H0.8z" fill="#fff" stroke="#6a6e72" stroke-width="0.9"/></svg>
<div class="t" style="left:558.10px;top:288.45px;font-size:7.8px;color:#5b5f63;font-weight:400;font-style:normal;">Maintenance Order:</div>
<div class="r" style="left:558.1px;top:300.75px;width:147.8px;height:14.4px;background:#ffffff;border:1px solid #dfe3e7;box-sizing:border-box"></div>
<svg class="r" style="left:691.9000000000001px;top:303.85px;" width="10" height="9" viewBox="0 0 10 9" fill="none"><path d="M4.2 0.8h4.3v4.3H6.6" stroke="#6a6e72" stroke-width="0.9"/><path d="M0.8 3.2h5.8v5H0.8z" fill="#fff" stroke="#6a6e72" stroke-width="0.9"/></svg>
<div class="t" style="left:401.50px;top:322.08px;font-size:7.8px;color:#5b5f63;font-weight:400;font-style:normal;">Priority:</div>
<div class="r" style="left:401.5px;top:334.38px;width:147.8px;height:14.4px;background:#ffffff;border:1px solid #dfe3e7;box-sizing:border-box"></div>
<svg class="r" style="left:535.3px;top:337.48px;" width="10" height="9" viewBox="0 0 10 9" fill="none"><path d="M4.2 0.8h4.3v4.3H6.6" stroke="#6a6e72" stroke-width="0.9"/><path d="M0.8 3.2h5.8v5H0.8z" fill="#fff" stroke="#6a6e72" stroke-width="0.9"/></svg>
<div class="t" style="left:558.10px;top:322.08px;font-size:7.8px;color:#5b5f63;font-weight:400;font-style:normal;">Planning Plant:</div>
<div class="r" style="left:558.1px;top:334.38px;width:147.8px;height:14.4px;background:#ffffff;border:1px solid #dfe3e7;box-sizing:border-box"></div>
<svg class="r" style="left:691.9000000000001px;top:337.48px;" width="10" height="9" viewBox="0 0 10 9" fill="none"><path d="M4.2 0.8h4.3v4.3H6.6" stroke="#6a6e72" stroke-width="0.9"/><path d="M0.8 3.2h5.8v5H0.8z" fill="#fff" stroke="#6a6e72" stroke-width="0.9"/></svg>
<div class="t" style="left:401.50px;top:355.71px;font-size:7.8px;color:#5b5f63;font-weight:400;font-style:normal;">Person Responsible:</div>
<div class="r" style="left:401.5px;top:368.01px;width:147.8px;height:14.4px;background:#ffffff;border:1px solid #dfe3e7;box-sizing:border-box"></div>
<svg class="r" style="left:535.3px;top:371.11px;" width="10" height="9" viewBox="0 0 10 9" fill="none"><path d="M4.2 0.8h4.3v4.3H6.6" stroke="#6a6e72" stroke-width="0.9"/><path d="M0.8 3.2h5.8v5H0.8z" fill="#fff" stroke="#6a6e72" stroke-width="0.9"/></svg>
<div class="t" style="left:558.10px;top:355.71px;font-size:7.8px;color:#5b5f63;font-weight:400;font-style:normal;">Breakdown:</div>
<div class="r" style="left:558.1px;top:368.01px;width:147.8px;height:14.4px;background:#ffffff;border:1px solid #dfe3e7;box-sizing:border-box"></div>
<svg class="r" style="left:693.7px;top:373.61px;" width="7.5" height="4.6" viewBox="0 0 7.5 4.6" fill="none"><path d="M0.5 0.5L3.75 3.8000000000000003L7.0 0.5" stroke="#5a5e62" stroke-width="0.9"/></svg>
<div class="t" style="left:407.00px;top:136.47px;font-size:7.6px;color:#8b8f93;font-weight:400;font-style:italic;">Search</div>
<div class="t" style="left:634.40px;top:399.47px;font-size:7.6px;color:#46525e;font-weight:400;font-style:normal;">Adapt Filters</div>
<div class="r" style="left:686.8px;top:395.2px;width:19.2px;height:14.8px;background:#4e92d2;border-radius:2px"></div>
<div class="t" style="left:691.00px;top:399.25px;font-size:7.5px;color:#ffffff;font-weight:700;font-style:normal;;-webkit-text-stroke:0">Go</div>
<div class="r" style="left:540px;top:415px;width:17.5px;height:7px;background:#d2dfeb;border-radius:1px 1px 0 0"></div>
<svg class="r" style="left:545px;top:415.5px;" width="7" height="5" viewBox="0 0 7 5" fill="none"><path d="M1 3.8L3.5 1.3L6 3.8" stroke="#6f8aa3" stroke-width="0.8"/></svg>
<div class="r" style="left:392.5px;top:421.9px;width:331.5px;height:77.5px;background:#ffffff;border:1.4px solid #5580a8;box-sizing:border-box"></div>
<div class="r" style="left:394px;top:423.3px;width:328.5px;height:24px;background:#f7f7f7;"></div>
<div class="r" style="left:394px;top:447px;width:328.5px;height:19.3px;background:#f5f5f5;border-top:1px solid #e6e6e6;border-bottom:1px solid #e6e6e6;box-sizing:border-box"></div>
<div class="r" style="left:394px;top:484.2px;width:328.5px;height:13.8px;background:#f7f7f7;border-top:1px solid #e6e6e6;box-sizing:border-box"></div>
<div class="t" style="left:401.90px;top:429.74px;font-size:10px;color:#32363a;font-weight:400;font-style:normal;">Maintenance Notifications (0)</div>
<div class="t" style="left:541.00px;top:429.90px;font-size:9.8px;color:#3b6ea5;font-weight:400;font-style:normal;">Standard</div>
<svg class="r" style="left:587px;top:433.5px;" width="9.6" height="5.4" viewBox="0 0 9.6 5.4" fill="none"><path d="M0.5 0.5L4.8 4.6000000000000005L9.1 0.5" stroke="#4a6888" stroke-width="1"/></svg>
<div class="t" style="left:650.30px;top:430.81px;font-size:7.55px;color:#b9bcbf;font-weight:400;font-style:normal;">Assign Order</div>
<svg class="r" style="left:707.5px;top:435px;" width="11" height="4" viewBox="0 0 11 4" fill="none"><circle cx="1.6" cy="2" r="1" fill="#6a6e72"/><circle cx="5" cy="2" r="1" fill="#6a6e72"/><circle cx="8.4" cy="2" r="1" fill="#6a6e72"/></svg>
<div class="r" style="left:398.4px;top:453.3px;width:8.8px;height:8.8px;background:#ffffff;border:1px solid #9a9fa4;box-sizing:border-box;border-radius:1px"></div>
<div class="t" style="left:416.00px;top:453.55px;font-size:7.85px;color:#32363a;font-weight:400;font-style:normal;">Notification</div>
<div class="t" style="left:496.70px;top:453.55px;font-size:7.85px;color:#32363a;font-weight:400;font-style:normal;">Notification Type</div>
<div class="t" style="left:609.20px;top:453.55px;font-size:7.85px;color:#32363a;font-weight:400;font-style:normal;">Technical Object</div>
<div class="t" style="left:502.90px;top:472.30px;font-size:7.8px;color:#32363a;font-weight:400;font-style:normal;">To start, set the relevant filters.</div>
<div class="r" style="left:738.5px;top:71px;width:1px;height:439.5px;background:#e8eaed;"></div>
<div class="t" style="left:744.10px;top:79.05px;font-size:8.8px;color:#32363a;font-weight:700;font-style:normal;;-webkit-text-stroke:0">SmartTable</div>
<div class="r" style="left:743.4px;top:96px;width:170px;height:12px;background:#ffffff;border:1px solid #dcdfe3;box-sizing:border-box"></div>
<div class="t" style="left:746.60px;top:99.00px;font-size:7.8px;color:#6a6e72;font-weight:400;font-style:italic;">Search for property name</div>
<svg class="r" style="left:902.3px;top:97.6px;" width="10" height="9" viewBox="0 0 10 9" fill="none"><circle cx="3.8" cy="3.6" r="2.8" stroke="#5a5e62" stroke-width="1"/><path d="M5.8 5.6l2.6 2.6" stroke="#5a5e62" stroke-width="1.3"/></svg>
<div class="r" style="left:908.2px;top:117px;width:5.5px;height:393.5px;background:#ededed;"></div>
<div class="r" style="left:908.2px;top:408.7px;width:5.5px;height:101.8px;background:#cdcdcd;"></div>
<div class="r" style="left:745px;top:119.4px;width:161px;height:11.6px;background:#ffffff;border:1px solid #d5d9dd;box-sizing:border-box"></div>
<div class="t" style="left:747.50px;top:123.18px;font-size:6.4px;color:#32363a;font-weight:700;font-style:normal;;-webkit-text-stroke:0">true</div>
<svg class="r" style="left:896.5px;top:123.60000000000001px;" width="7" height="4.2" viewBox="0 0 7 4.2" fill="none"><path d="M0.5 0.5L3.5 3.4000000000000004L6.5 0.5" stroke="#8a8e92" stroke-width="0.9"/></svg>
<div class="t" style="left:745.00px;top:143.41px;font-size:6.6px;color:#5b5f63;font-weight:400;font-style:normal;">Smart Filter Id</div>
<div class="r" style="left:745px;top:153.3px;width:161px;height:11.6px;background:#fafafa;border:1px solid #e3e5e8;box-sizing:border-box"></div>
<div class="t" style="left:750.00px;top:156.23px;font-size:6.7px;color:#8b8f93;font-weight:400;font-style:normal;">listReportFilter</div>
<div class="t" style="left:745.00px;top:177.31px;font-size:6.6px;color:#5b5f63;font-weight:400;font-style:normal;">Table Binding Path</div>
<div class="r" style="left:745px;top:187.2px;width:161px;height:11.6px;background:#ffffff;border:1px solid #e3e5e8;box-sizing:border-box"></div>
<div class="t" style="left:745.00px;top:211.41px;font-size:6.6px;color:#5b5f63;font-weight:400;font-style:normal;">Table Type</div>
<div class="r" style="left:745px;top:221.4px;width:161px;height:11.6px;background:#fdfdfd;border:1px solid #eceef0;box-sizing:border-box"></div>
<div class="t" style="left:747.50px;top:225.18px;font-size:6.4px;color:#d0d3d6;font-weight:400;font-style:normal;">Table</div>
<svg class="r" style="left:896.5px;top:225.6px;" width="7" height="4.2" viewBox="0 0 7 4.2" fill="none"><path d="M0.5 0.5L3.5 3.4000000000000004L6.5 0.5" stroke="#c9ccce" stroke-width="0.9"/></svg>
<div class="t" style="left:745.00px;top:245.41px;font-size:6.6px;color:#5b5f63;font-weight:400;font-style:normal;">Toolbar Style Class</div>
<div class="r" style="left:745px;top:254.8px;width:161px;height:11.6px;background:#ffffff;border:1px solid #e3e5e8;box-sizing:border-box"></div>
<div class="t" style="left:745.00px;top:279.51px;font-size:6.6px;color:#5b5f63;font-weight:400;font-style:normal;">Use Export To Excel</div>
<div class="r" style="left:745px;top:289px;width:158px;height:12.4px;background:#ffffff;border:1px solid #8797ab;border-top-width:1.5px;box-sizing:border-box"></div>
<div class="r" style="left:746.2px;top:291px;width:15px;height:9px;background:#c3d7ee;"></div>
<div class="t" style="left:747.20px;top:293.18px;font-size:6.4px;color:#1d2a38;font-weight:700;font-style:normal;-webkit-text-stroke:0">false</div>
<svg class="r" style="left:896.5px;top:293.6px;" width="7" height="4.2" viewBox="0 0 7 4.2" fill="none"><path d="M0.5 0.5L3.5 3.4000000000000004L6.5 0.5" stroke="#6a6e72" stroke-width="0.9"/></svg>
<div class="r" style="left:745px;top:301.4px;width:158px;height:41.3px;background:#ffffff;box-shadow:0 1px 2px rgba(0,0,0,.2)"></div>
<div class="t" style="left:748.60px;top:309.77px;font-size:7.6px;color:#32363a;font-weight:400;font-style:normal;">true</div>
<div class="r" style="left:745px;top:323px;width:158px;height:19.7px;background:#0e5b8f;"></div>
<div class="t" style="left:748.60px;top:329.57px;font-size:7.6px;color:#ffffff;font-weight:400;font-style:normal;">false</div>
<div class="t" style="left:745.00px;top:347.31px;font-size:6.6px;color:#5b5f63;font-weight:400;font-style:normal;">Use Table Personalization</div>
<div class="r" style="left:745px;top:358.3px;width:161px;height:11.6px;background:#fdfdfd;border:1px solid #eceef0;box-sizing:border-box"></div>
<div class="t" style="left:747.50px;top:362.08px;font-size:6.4px;color:#d0d3d6;font-weight:400;font-style:normal;">true</div>
<svg class="r" style="left:896.5px;top:362.5px;" width="7" height="4.2" viewBox="0 0 7 4.2" fill="none"><path d="M0.5 0.5L3.5 3.4000000000000004L6.5 0.5" stroke="#c9ccce" stroke-width="0.9"/></svg>
<div class="t" style="left:745.00px;top:381.91px;font-size:6.6px;color:#5b5f63;font-weight:400;font-style:normal;">Use Variant Management</div>
<div class="r" style="left:745px;top:392px;width:161px;height:11.6px;background:#fdfdfd;border:1px solid #eceef0;box-sizing:border-box"></div>
<div class="t" style="left:747.50px;top:395.78px;font-size:6.4px;color:#d0d3d6;font-weight:400;font-style:normal;">true</div>
<svg class="r" style="left:896.5px;top:396.2px;" width="7" height="4.2" viewBox="0 0 7 4.2" fill="none"><path d="M0.5 0.5L3.5 3.4000000000000004L6.5 0.5" stroke="#c9ccce" stroke-width="0.9"/></svg>
<div class="t" style="left:745.00px;top:415.31px;font-size:6.6px;color:#5b5f63;font-weight:400;font-style:normal;">Visible</div>
<div class="r" style="left:745px;top:426px;width:161px;height:11.6px;background:#ffffff;border:1px solid #d5d9dd;box-sizing:border-box"></div>
<div class="t" style="left:747.50px;top:429.78px;font-size:6.4px;color:#32363a;font-weight:700;font-style:normal;;-webkit-text-stroke:0">true</div>
<svg class="r" style="left:896.5px;top:430.2px;" width="7" height="4.2" viewBox="0 0 7 4.2" fill="none"><path d="M0.5 0.5L3.5 3.4000000000000004L6.5 0.5" stroke="#8a8e92" stroke-width="0.9"/></svg>
<div class="t" style="left:745.00px;top:449.51px;font-size:6.6px;color:#5b5f63;font-weight:400;font-style:normal;">Width</div>
<div class="r" style="left:745px;top:459.8px;width:161px;height:11.6px;background:#ffffff;border:1px solid #e3e5e8;box-sizing:border-box"></div>
<div class="t" style="left:745.00px;top:483.71px;font-size:6.6px;color:#5b5f63;font-weight:400;font-style:normal;">Wrap</div>
<div class="r" style="left:745px;top:494px;width:161px;height:11.6px;background:#ffffff;border:1px solid #d5d9dd;box-sizing:border-box"></div>
<div class="t" style="left:747.50px;top:497.78px;font-size:6.4px;color:#32363a;font-weight:700;font-style:normal;;-webkit-text-stroke:0">NoWrap</div>
<svg class="r" style="left:896.5px;top:498.2px;" width="7" height="4.2" viewBox="0 0 7 4.2" fill="none"><path d="M0.5 0.5L3.5 3.4000000000000004L6.5 0.5" stroke="#8a8e92" stroke-width="0.9"/></svg>
<div class="r" style="left:735px;top:262.6px;width:171.4px;height:86.8px;background:none;border:5.7px solid #f80c12;border-radius:11px;box-sizing:border-box;box-shadow:0 0 2.5px rgba(0,0,0,.4), inset 0 0 3px rgba(0,0,0,.4)"></div>
<svg class="r" style="left:923px;top:42.5px;" width="13" height="11" viewBox="0 0 13 11" fill="none"><circle cx="5" cy="4.6" r="3.8" stroke="#5d6166" stroke-width="1"/><path d="M7.8 7.4l2.6 2.6" stroke="#5d6166" stroke-width="1.6"/><path d="M3.2 3.5a2 2 0 0 1 1.5-1" stroke="#5d6166" stroke-width="0.7"/></svg>
<svg class="r" style="left:923px;top:69.5px;" width="13" height="12" viewBox="0 0 13 12" fill="none"><path d="M6.2 0.8L11.6 6.2L6.2 11.6L0.8 6.2z" stroke="#5d6166" stroke-width="1"/><path d="M5 4l2.2 2.2L5 8.4" stroke="#5d6166" stroke-width="0.9"/></svg>
<svg class="r" style="left:923px;top:96px;" width="13" height="12" viewBox="0 0 13 12" fill="none"><circle cx="6.2" cy="6.2" r="5" stroke="#5d6166" stroke-width="1"/><path d="M6 3v3.4h2.6" stroke="#5d6166" stroke-width="0.9"/></svg>
<svg class="r" style="left:924px;top:123.5px;" width="11" height="12" viewBox="0 0 11 12" fill="none"><path d="M1 1.5h8M1 4.3h8M1 7.1h8M1 9.9h8" stroke="#5d6166" stroke-width="0.9"/></svg>
<svg class="r" style="left:923px;top:151.5px;" width="13" height="11" viewBox="0 0 13 11" fill="none"><ellipse cx="6.5" cy="6" rx="2.7" ry="3.5" stroke="#5d6166" stroke-width="0.9"/><path d="M4.5 2.5L3 1M8.5 2.5L10 1M3.8 5H1.2M9.2 5h2.6M3.8 7.5l-2.4 1.5M9.2 7.5l2.4 1.5M6.5 3v6" stroke="#5d6166" stroke-width="0.8"/></svg>
<svg class="r" style="left:924px;top:178.5px;" width="12" height="12" viewBox="0 0 12 12" fill="none"><path d="M3 2H1.3v9h4M8.5 2h1.7v3.5" stroke="#5d6166" stroke-width="0.9"/><rect x="3.3" y="1" width="4.6" height="2" stroke="#5d6166" stroke-width="0.8"/><path d="M6 8.5l1.5 1.5l3-3" stroke="#5d6166" stroke-width="0.9"/></svg>
<svg class="r" style="left:923px;top:408px;" width="12" height="11" viewBox="0 0 12 11" fill="none"><rect x="1" y="1" width="10" height="8.5" rx="0.8" stroke="#5d6166" stroke-width="0.9"/><path d="M3 4l1.5 1.2L3 6.4" stroke="#5d6166" stroke-width="0.8"/></svg>
<svg class="r" style="left:923px;top:434.5px;" width="13" height="11" viewBox="0 0 13 11" fill="none"><path d="M6.5 1L12 10.2H1z" stroke="#5d6166" stroke-width="1"/><path d="M6.5 4v3.5M6.5 8.3v0.9" stroke="#5d6166" stroke-width="0.9"/></svg>
<svg class="r" style="left:923px;top:462px;" width="13" height="12" viewBox="0 0 13 12" fill="none"><path d="M11 5V1.5H1.2v8H5" stroke="#5d6166" stroke-width="0.9"/><circle cx="8.5" cy="8" r="2.6" stroke="#5d6166" stroke-width="0.9"/><path d="M3 3l1 0.8" stroke="#5d6166" stroke-width="0.8"/></svg>
<svg class="r" style="left:923px;top:489.5px;" width="12" height="12" viewBox="0 0 12 12" fill="none"><path d="M6 1L10.5 2.8v3.5C10.5 9 8.5 10.5 6 11.2C3.5 10.5 1.5 9 1.5 6.3V2.8z" stroke="#5d6166" stroke-width="0.9"/><path d="M6.4 3.5L5 6.2h2L5.6 8.8" stroke="#5d6166" stroke-width="0.8"/></svg>
<svg class="r" style="left:770px;top:0px" width="169" height="525" viewBox="770 0 169 525" fill="none"><g transform="translate(770,0)"><g transform="translate(20.60,500.3) scale(0.97,0.98)"><path d="M5.5 1L1.5 2.5M0.5 5H6.5M3.5 2V15.5M3.5 6L0.5 11M3.8 7L6 9M8 1L14 5M14 1L8 5M7 6.5H16M11 5L8 10M9 13V9.5H15V13M12 8V16" stroke="#ffffff" stroke-opacity="0.85" stroke-width="2.4"/><path d="M5.5 1L1.5 2.5M0.5 5H6.5M3.5 2V15.5M3.5 6L0.5 11M3.8 7L6 9M8 1L14 5M14 1L8 5M7 6.5H16M11 5L8 10M9 13V9.5H15V13M12 8V16" stroke="#8d8d8d" stroke-width="0.95"/></g><g transform="translate(37.90,500.3) scale(0.97,0.98)"><path d="M2 6H14M8 1V14.5M0.5 14.5H15.5" stroke="#ffffff" stroke-opacity="0.85" stroke-width="2.4"/><path d="M2 6H14M8 1V14.5M0.5 14.5H15.5" stroke="#8d8d8d" stroke-width="0.95"/></g><g transform="translate(56.60,500.3) scale(0.97,0.98)"><path d="M0 5H5M2.5 1V15L1.5 14M0 11L5 8.5M7 2H15V5H7M7 2V10L6 15M9 7V10H14V7M11.5 6V15M8.5 11V15H14.5V11" stroke="#ffffff" stroke-opacity="0.85" stroke-width="2.4"/><path d="M0 5H5M2.5 1V15L1.5 14M0 11L5 8.5M7 2H15V5H7M7 2V10L6 15M9 7V10H14V7M11.5 6V15M8.5 11V15H14.5V11" stroke="#8d8d8d" stroke-width="0.95"/></g><g transform="translate(75.20,500.3) scale(0.97,0.98)"><path d="M8 0.5L0.5 7M8 0.5L15.5 7M4 7.5H12M3 10.5H13M8 7.5V15M5 12L6 14M11 12L10 14M1 15H15" stroke="#ffffff" stroke-opacity="0.85" stroke-width="2.4"/><path d="M8 0.5L0.5 7M8 0.5L15.5 7M4 7.5H12M3 10.5H13M8 7.5V15M5 12L6 14M11 12L10 14M1 15H15" stroke="#8d8d8d" stroke-width="0.95"/></g><g transform="translate(92.70,500.3) scale(0.97,0.98)"><path d="M0 5H5M2.5 1V15L1.5 14M0 11L5 8.5M6.5 4H15.5M11 0.5V8M7 8H14.5L7 15.5M8.5 10L15.5 15.5" stroke="#ffffff" stroke-opacity="0.85" stroke-width="2.4"/><path d="M0 5H5M2.5 1V15L1.5 14M0 11L5 8.5M6.5 4H15.5M11 0.5V8M7 8H14.5L7 15.5M8.5 10L15.5 15.5" stroke="#8d8d8d" stroke-width="0.95"/></g><g transform="translate(109.50,500.3) scale(0.97,0.98)"><path d="M0.5 5H15.5M8 0.5V15.5M7.5 5.5L0.5 13M8.5 5.5L15.5 13M11 1.5L12.5 3" stroke="#ffffff" stroke-opacity="0.85" stroke-width="2.4"/><path d="M0.5 5H15.5M8 0.5V15.5M7.5 5.5L0.5 13M8.5 5.5L15.5 13M11 1.5L12.5 3" stroke="#8d8d8d" stroke-width="0.95"/></g><g transform="translate(127.30,500.3) scale(0.97,0.98)"><path d="M3 0.5L4 2M0.5 4.5H5.5L0.5 10.5M3.5 6.5V15.5M4 8L6 10M8 6.5H15M11.5 1V15M7 15H16" stroke="#ffffff" stroke-opacity="0.85" stroke-width="2.4"/><path d="M3 0.5L4 2M0.5 4.5H5.5L0.5 10.5M3.5 6.5V15.5M4 8L6 10M8 6.5H15M11.5 1V15M7 15H16" stroke="#8d8d8d" stroke-width="0.95"/></g><g transform="translate(146.00,500.3) scale(0.97,0.98)"><path d="M15 1.5H1V15H15.5M4 4L13 12.5M12.5 4L4 12.5" stroke="#ffffff" stroke-opacity="0.85" stroke-width="2.4"/><path d="M15 1.5H1V15H15.5M4 4L13 12.5M12.5 4L4 12.5" stroke="#8d8d8d" stroke-width="0.95"/></g></g></svg>
<div class="t" style="left:772.80px;top:499.81px;font-size:17px;color:#8d8d8d;font-weight:400;font-style:normal;font-family:"Liberation Serif",serif;text-shadow:0 0 1px #fff,0 0 1px #fff">@</div>
<div class="t" style="left:9.60px;top:514.58px;font-size:6.4px;color:#32363a;font-weight:700;font-style:normal;;-webkit-text-stroke:0">Project:</div>
<div class="t" style="left:38.30px;top:515.04px;font-size:6.8px;color:#32363a;font-weight:400;font-style:normal;">s4demo</div>
</body></html>
